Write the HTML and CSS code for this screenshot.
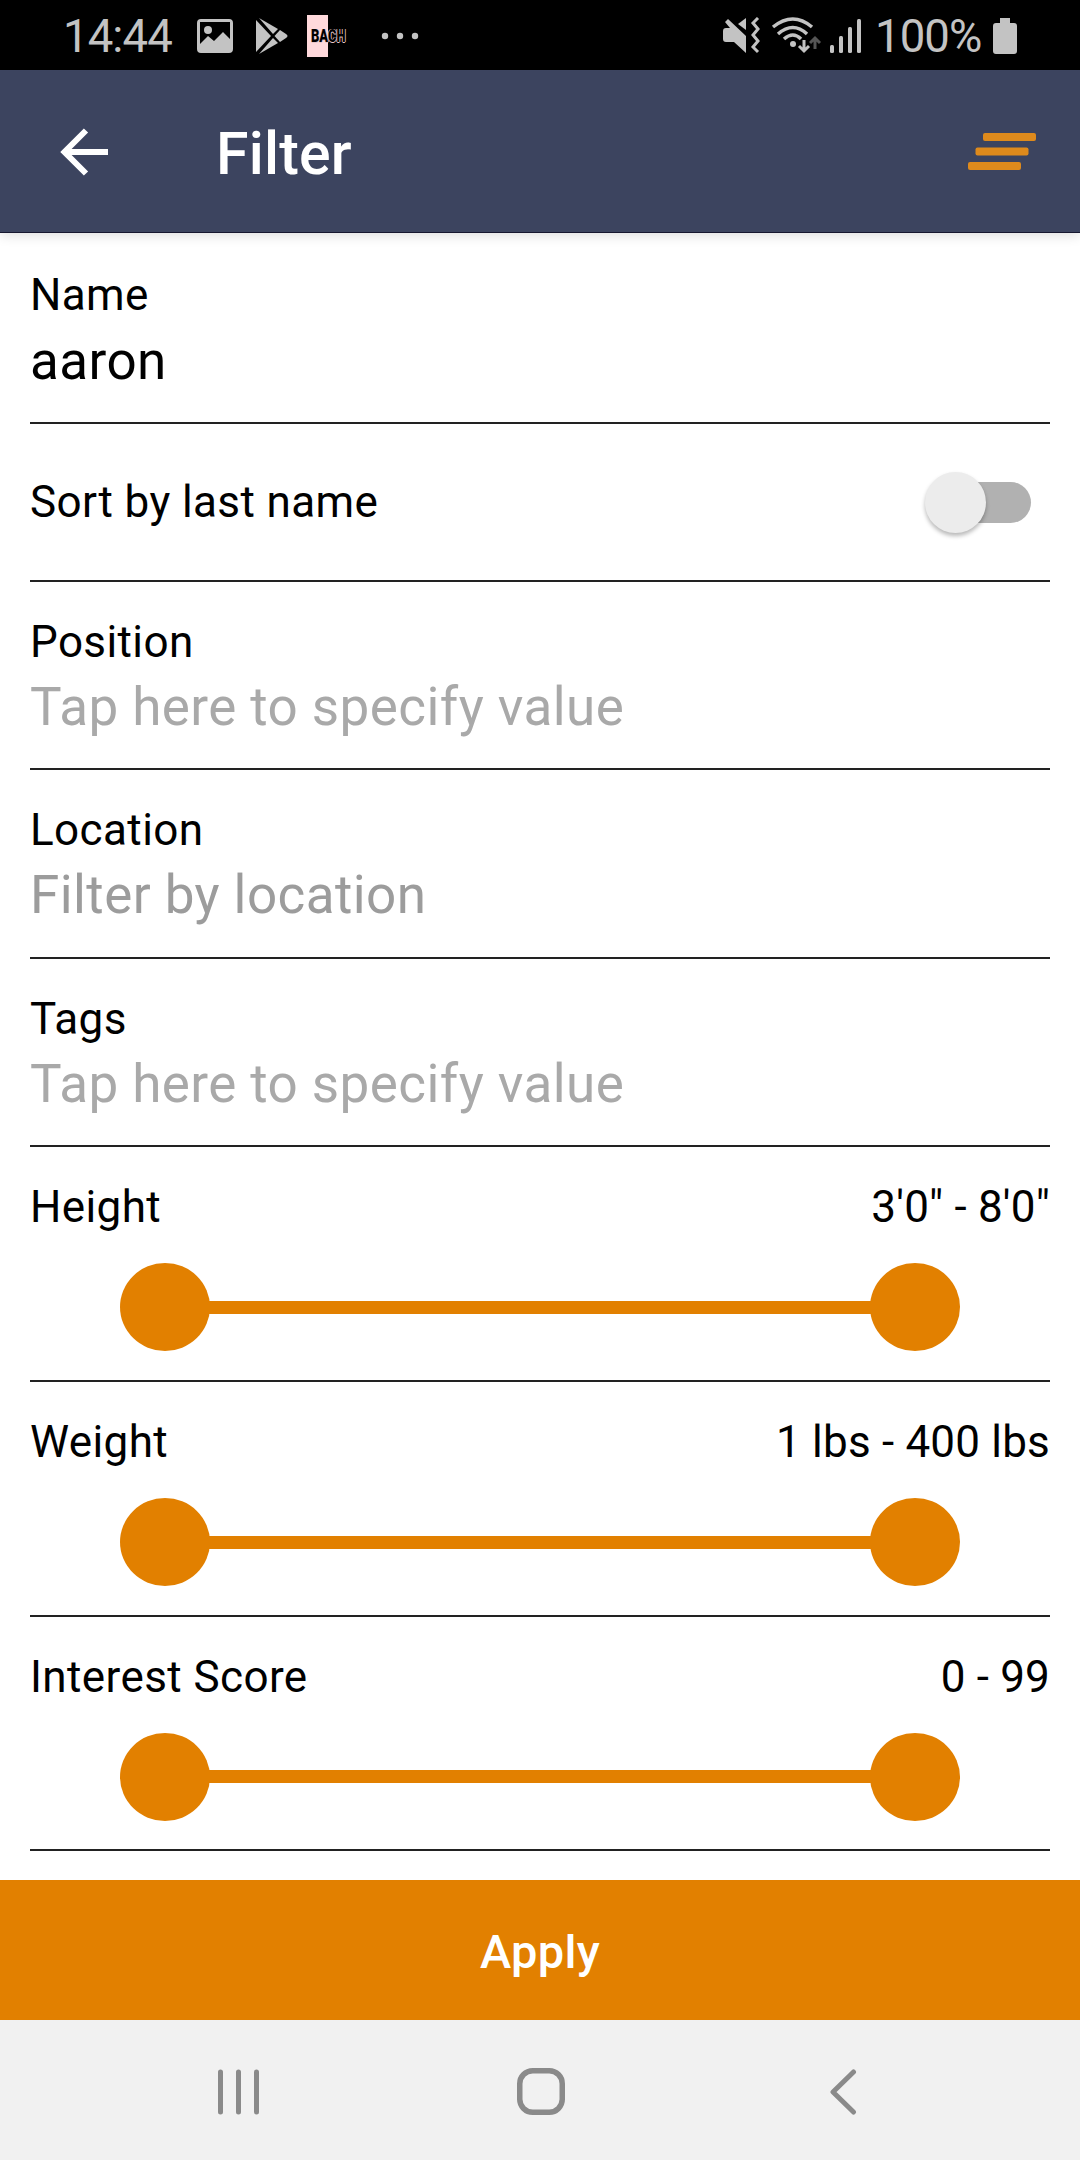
FILE: index.html
```html
<!DOCTYPE html>
<html lang="en">
<head>
  <meta charset="UTF-8">
  <title>Filter</title>
  <meta name="viewport" content="width=device-width, initial-scale=1.0">
  <link rel="stylesheet" href="styles.css">
</head>
<body>
  <div class="status-bar">
    <span class="clock">14:44</span>
    <svg class="ic-image" width="36" height="34" viewBox="0 0 36 34">
      <path fill="#c3c3c3" fill-rule="evenodd" d="M4 0H32Q36 0 36 4V30Q36 34 32 34H4Q0 34 0 30V4Q0 0 4 0ZM3 3V25L11 17L17 22L26 13L33 20V3Z"/>
      <circle cx="11" cy="11" r="4" fill="#c3c3c3"/>
    </svg>
    <svg class="ic-play" width="32" height="36" viewBox="0 0 32 36">
      <g fill="#c3c3c3">
        <path d="M0 2L15 18L0 34Z"/>
        <path d="M3 0L22 11L17 16Z"/>
        <path d="M3 36L22 25L17 20Z"/>
        <path d="M24 12L30 16Q33 18 30 20L24 24L18.500 18Z"/>
      </g>
    </svg>
    <div class="bach"><span>BACH</span></div>
    <svg class="ic-more" width="38" height="8" viewBox="0 0 38 8">
      <g fill="#c3c3c3"><circle cx="4" cy="4" r="3.200"/><circle cx="19" cy="4" r="3.200"/><circle cx="34" cy="4" r="3.200"/></g>
    </svg>
    <svg class="ic-system" width="140" height="38" viewBox="0 0 140 38">
      <g fill="#c3c3c3">
        <path d="M0 14Q0 11 3 11H7L2 5L5 2L23 19V36L11 25H3Q0 25 0 22Z"/>
        <path d="M15 7L23 1V13Z"/>
        <circle cx="70" cy="27" r="3"/>
        <rect x="107" y="28" width="4" height="8" rx="1.500"/>
        <rect x="116" y="19" width="4" height="17" rx="1.500"/>
        <rect x="125" y="10" width="4" height="26" rx="1.500"/>
        <rect x="134" y="2" width="4" height="34" rx="1.500"/>
      </g>
      <g fill="none" stroke="#c3c3c3" stroke-width="3.500">
        <path d="M35 1L30 6L35 12L30 18L35 24L30 30L35 35" stroke-width="3"/>
        <path d="M50 10Q70-6 89 10"/>
        <path d="M55 17Q70 4 84 17"/>
        <path d="M61 22Q70 14 78 22"/>
        <path d="M81 23V34M76 29L81 34L86 29" stroke-width="3"/>
        <path d="M92 32V21M87 26L92 21L97 26" stroke="#555" stroke-width="3"/>
      </g>
    </svg>
    <span class="percent">100%</span>
    <svg class="ic-battery" width="24" height="36" viewBox="0 0 24 36">
      <path fill="#c3c3c3" d="M7 0H17V5H21Q24 5 24 8V33Q24 36 21 36H3Q0 36 0 33V8Q0 5 3 5H7Z"/>
    </svg>
  </div>

  <header class="toolbar">
    <svg class="back" width="50" height="48" viewBox="0 0 50 48">
      <path d="M26 2.500L4.500 24L26 45.500M4 24H48" fill="none" stroke="#fff" stroke-width="6"/>
    </svg>
    <h1>Filter</h1>
    <svg class="clear" width="70" height="40" viewBox="0 0 70 40">
      <g fill="#de8a1c">
        <rect x="16" y="1" width="53" height="8" rx="2"/>
        <rect x="8.500" y="15.500" width="53" height="8" rx="2"/>
        <rect x="1" y="30" width="53" height="8" rx="2"/>
      </g>
    </svg>
  </header>

  <main class="filters">
    <div class="row field first">
      <div class="label">Name</div>
      <div class="value">aaron</div>
    </div>
    <div class="row sort">
      <div class="label">Sort by last name</div>
      <div class="switch"><div class="thumb"></div></div>
    </div>
    <div class="row field">
      <div class="label">Position</div>
      <div class="value empty">Tap here to specify value</div>
    </div>
    <div class="row field">
      <div class="label">Location</div>
      <div class="value hint">Filter by location</div>
    </div>
    <div class="row field">
      <div class="label">Tags</div>
      <div class="value empty">Tap here to specify value</div>
    </div>
    <div class="row range">
      <div class="range-head"><span class="label">Height</span><span class="label amount">3'0" - 8'0"</span></div>
      <div class="slider"><i class="knob"></i><i class="track"></i><i class="knob"></i></div>
    </div>
    <div class="row range">
      <div class="range-head"><span class="label">Weight</span><span class="label amount">1 lbs - 400 lbs</span></div>
      <div class="slider"><i class="knob"></i><i class="track"></i><i class="knob"></i></div>
    </div>
    <div class="row range">
      <div class="range-head"><span class="label">Interest Score</span><span class="label amount">0 - 99</span></div>
      <div class="slider"><i class="knob"></i><i class="track"></i><i class="knob"></i></div>
    </div>
  </main>

  <button class="apply">Apply</button>

  <nav class="nav-bar">
    <svg width="44" height="46" viewBox="0 0 44 46">
      <path d="M3.500 3V43M21.500 3V43M39.500 3V43" stroke="#8a8a8a" stroke-width="5" stroke-linecap="round"/>
    </svg>
    <svg class="home" width="48" height="48" viewBox="0 0 48 48">
      <rect x="2.750" y="2.750" width="42.500" height="41.500" rx="13" fill="none" stroke="#8a8a8a" stroke-width="5.500"/>
    </svg>
    <svg width="28" height="46" viewBox="0 0 28 46">
      <path d="M24.500 3L4 23L24.500 43" fill="none" stroke="#8a8a8a" stroke-width="5" stroke-linecap="round" stroke-linejoin="round"/>
    </svg>
  </nav>
</body>
</html>
```
FILE: styles.css
```css
* {
  box-sizing: border-box;
}
html, body {
  margin: 0;
  padding: 0;
}
body {
  width: 1080px;
  height: 2160px;
  display: flex;
  flex-direction: column;
  overflow: hidden;
  background: #fff;
  color: #000;
  font-family: Roboto, sans-serif;
}
svg {
  display: block;
  flex: none;
}

/* status bar */
.status-bar {
  height: 70px;
  flex: none;
  display: flex;
  align-items: center;
  padding: 2px 63px 0 63px;
  background: #000;
  color: #c3c3c3;
  font-size: 45.500px;
  white-space: nowrap;
}
.clock {
  width: 134px;
  letter-spacing: -0.900px;
}
.ic-play {
  margin-left: 23px;
}
.bach {
  width: 21px;
  height: 42px;
  margin-left: 19px;
  display: flex;
  align-items: center;
  background: #ffd9dc;
}
.bach span {
  margin-left: 4px;
  font-size: 19px;
  font-weight: 900;
  line-height: 20px;
  color: #000;
  text-shadow: 1px 0 #e9c6c9, 0 1px #e9c6c9, -1px 0 #e9c6c9;
  transform: scaleX(0.68);
  transform-origin: left;
}
.ic-more {
  margin-left: 53px;
}
.ic-system {
  margin-left: auto;
}
.percent {
  width: 108px;
  margin-left: 12px;
  letter-spacing: -0.900px;
}
.ic-battery {
  margin-left: 10px;
}

/* toolbar */
.toolbar {
  position: relative;
  height: 163px;
  flex: none;
  display: flex;
  align-items: center;
  padding: 2px 43px 0 60px;
  background: #3c445f;
  border-bottom: 1px solid #16172f;
  box-shadow: 0 2px 12px rgba(0, 0, 0, 0.14);
}
.toolbar h1 {
  margin: 4px 0 0 106px;
  font-size: 59px;
  font-weight: 500;
  line-height: 68px;
  letter-spacing: 0.200px;
  color: #fff;
}
.clear {
  margin-left: auto;
}

/* filter rows */
.filters {
  height: 1647px;
  flex: none;
  padding: 0 30px;
}
.row {
  border-bottom: 2px solid #222;
}
.label {
  font-size: 44px;
  line-height: 52px;
  letter-spacing: 0.400px;
}
.label.amount {
  letter-spacing: 0.200px;
}
.value {
  font-size: 53px;
  line-height: 62px;
  margin-top: 8px;
  letter-spacing: 0.430px;
}
.value.empty {
  color: #a9a9a9;
}
.value.hint {
  color: #9c9c9c;
}
.field {
  height: 188.600px;
  padding-top: 34px;
}
.field.first {
  height: 191px;
  padding-top: 36px;
}
.field.first .value {
  margin-top: 9px;
}
.sort {
  height: 157.600px;
  display: flex;
  justify-content: space-between;
  align-items: center;
  padding-top: 1px;
}
.switch {
  width: 100px;
  height: 41px;
  margin-right: 19px;
  display: flex;
  align-items: center;
  border-radius: 21px;
  background: #b1b1b1;
}
.thumb {
  width: 61px;
  height: 61px;
  margin-left: -6px;
  flex: none;
  border-radius: 50%;
  background: #ececec;
  box-shadow: 0 3px 4px rgba(0, 0, 0, 0.28);
}
.range {
  height: 234.700px;
  padding-top: 34px;
}
.range-head {
  display: flex;
  justify-content: space-between;
}
.slider {
  display: flex;
  align-items: center;
  margin: 30px 90px 0;
}
.knob {
  width: 90px;
  height: 88px;
  border-radius: 50%;
  background: #e28000;
}
.track {
  flex: 1;
  height: 13px;
  margin: 0 -2px;
  background: #e28000;
}

/* bottom */
.apply {
  height: 140px;
  flex: none;
  border: none;
  padding: 3px 0 0;
  background: #e28000;
  color: #fff;
  font-family: inherit;
  font-size: 47px;
  font-weight: 500;
  letter-spacing: 0.300px;
}
.nav-bar {
  flex: 1;
  display: flex;
  justify-content: space-between;
  align-items: center;
  padding: 4px 223px 0 217px;
  background: #f1f1f1;
}
.home {
  margin-right: 8px;
}
```
